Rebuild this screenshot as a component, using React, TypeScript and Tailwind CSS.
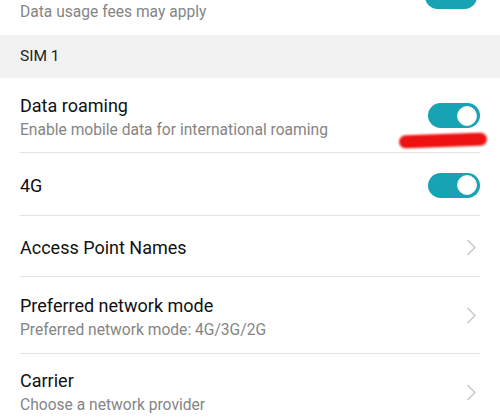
const font = { fontFamily: 'Roboto, "Noto Sans", sans-serif' };

function Toggle() {
  return (
    <div className="w-[52px] h-[25px] rounded-full bg-[#17a3b3] flex items-center justify-end pr-[3px]">
      <div className="w-[20px] h-[20px] rounded-full bg-white border border-[#e8f4f5]" />
    </div>
  );
}

function Chevron() {
  return (
    <svg width="11" height="17" viewBox="0 0 11 17" fill="none" className="mr-[3px]">
      <path d="M1.5 1 L9 8.5 L1.5 16" stroke="#c6c6c6" strokeWidth="1.4" />
    </svg>
  );
}

function Texts({ title, sub }: { title: string; sub: string }) {
  return (
    <div className="flex-1">
      <div className="text-[18px] leading-[25px] text-[#111]">{title}</div>
      <div className="text-[15.6px] leading-[25px] text-[#858585]">{sub}</div>
    </div>
  );
}

export default function App() {
  return (
    <div className="w-[500px] h-[417px] overflow-hidden bg-white" style={font}>
      {/* previous item, cut off */}
      <div className="h-[35px] px-5 relative">
        <div className="text-[15.6px] leading-[24px] text-[#858585]">Data usage fees may apply</div>
        <div className="absolute right-[23px] -top-[16px] w-[52px] h-[25px] rounded-full bg-[#17a3b3]" />
      </div>
      <div className="h-[43px] bg-[#f2f2f2] px-5 flex items-center">
        <span className="text-[15.5px] text-[#222]">SIM 1</span>
      </div>
      <div className="mx-5 h-[75px] border-b border-[#e2e2e2] flex pt-[15px] relative">
        <Texts title="Data roaming" sub="Enable mobile data for international roaming" />
        <div className="mt-[10px]">
          <Toggle />
        </div>
        <div className="absolute right-[-7px] top-[56px] w-[88px] h-[13px] rounded-full bg-[#ee1111] blur-[1px] -rotate-2" />
      </div>
      <div className="mx-5 h-[63px] border-b border-[#e2e2e2] flex items-center pt-[2px]">
        <div className="flex-1 text-[18px] text-[#111]">4G</div>
        <Toggle />
      </div>
      <div className="mx-5 h-[61px] border-b border-[#e2e2e2] flex items-center pt-[2px]">
        <div className="flex-1 text-[18px] text-[#111]">Access Point Names</div>
        <Chevron />
      </div>
      <div className="mx-5 h-[77px] border-b border-[#e2e2e2] flex pt-[16px]">
        <Texts title="Preferred network mode" sub="Preferred network mode: 4G/3G/2G" />
        <div className="self-center -mt-[16px]">
          <Chevron />
        </div>
      </div>
      <div className="mx-5 h-[77px] flex pt-[14px]">
        <Texts title="Carrier" sub="Choose a network provider" />
        <div className="self-center -mt-[14px]">
          <Chevron />
        </div>
      </div>
    </div>
  );
}
